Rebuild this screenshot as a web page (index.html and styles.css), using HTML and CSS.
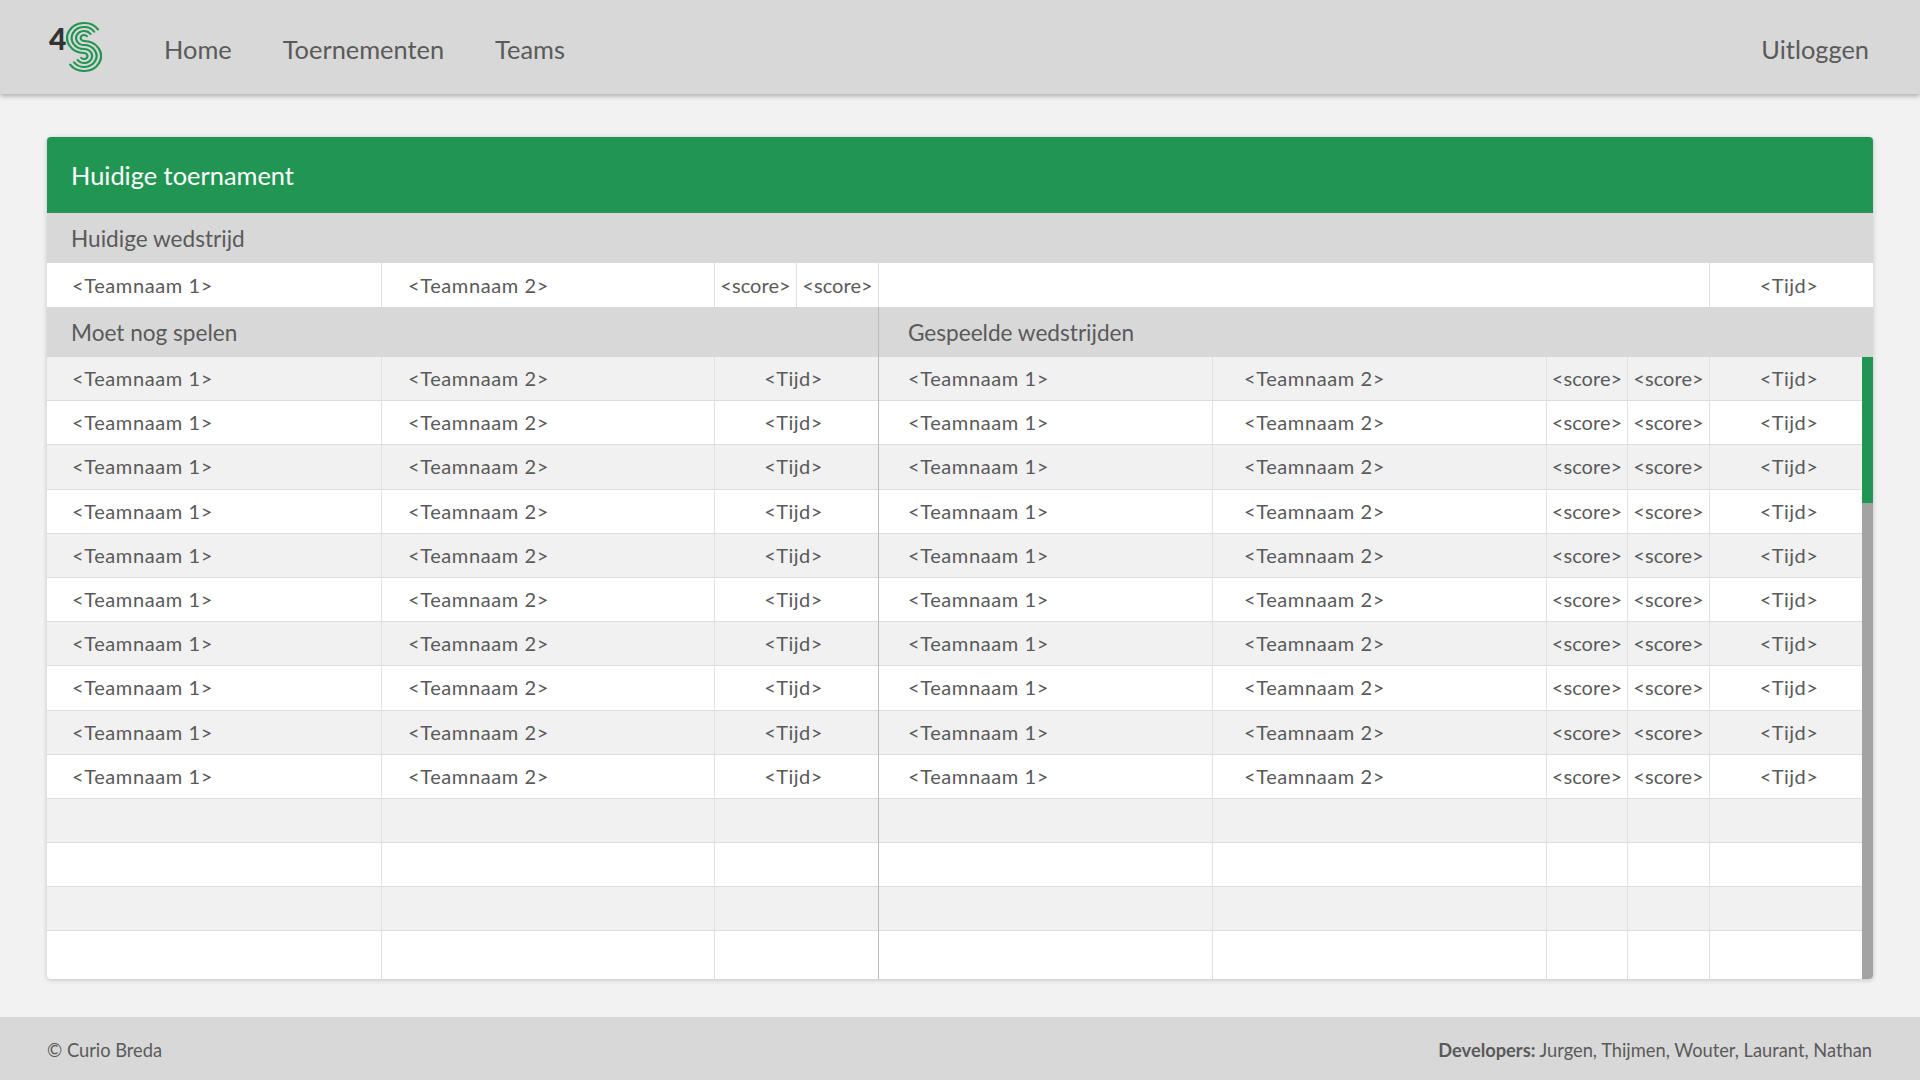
FILE: index.html
```html
<!DOCTYPE html>
<html lang="en">
<head>
  <meta charset="UTF-8" />
  <title>Huidige toernament</title>
  <link rel="stylesheet" href="styles.css">
</head>
<body>
  <nav class="navbar">
    <a class="logo" href="#">
      <span class="logo-four">4</span>
      <svg class="logo-s" width="36" height="50" viewBox="0 0 36 50" fill="none" stroke="#219653" stroke-width="2" stroke-linecap="round">
        <g transform="scale(1.13 1) translate(-2 0)">
          <path d="M30.3 7.4A15 15 0 1 0 18 31A3 3 0 1 1 15.5 35.7" />
          <path d="M27 9.7A11 11 0 1 0 18 27A7 7 0 1 1 12.3 38" />
          <path d="M23.7 12A7 7 0 1 0 18 23A11 11 0 1 1 9 40.3" />
          <path d="M20.5 14.3A3 3 0 1 0 18 19A15 15 0 1 1 5.7 42.6" />
        </g>
      </svg>
    </a>
    <a class="nav-link" href="#">Home</a>
    <a class="nav-link" href="#">Toernementen</a>
    <a class="nav-link" href="#">Teams</a>
    <a class="nav-link logout" href="#">Uitloggen</a>
  </nav>

  <main class="content">
    <section class="card">
      <h1 class="card-head">Huidige toernament</h1>
      <h2 class="band">Huidige wedstrijd</h2>
      <div class="row current">
        <div>&lt;Teamnaam 1&gt;</div><div>&lt;Teamnaam 2&gt;</div><div class="mid">&lt;score&gt;</div><div class="mid">&lt;score&gt;</div><div></div><div class="mid">&lt;Tijd&gt;</div>
      </div>
      <div class="split">
        <div class="col-left">
          <h2 class="band">Moet nog spelen</h2>
          <div class="rows">
            <div class="row todo"><div>&lt;Teamnaam 1&gt;</div><div>&lt;Teamnaam 2&gt;</div><div class="mid">&lt;Tijd&gt;</div></div>
            <div class="row todo"><div>&lt;Teamnaam 1&gt;</div><div>&lt;Teamnaam 2&gt;</div><div class="mid">&lt;Tijd&gt;</div></div>
            <div class="row todo"><div>&lt;Teamnaam 1&gt;</div><div>&lt;Teamnaam 2&gt;</div><div class="mid">&lt;Tijd&gt;</div></div>
            <div class="row todo"><div>&lt;Teamnaam 1&gt;</div><div>&lt;Teamnaam 2&gt;</div><div class="mid">&lt;Tijd&gt;</div></div>
            <div class="row todo"><div>&lt;Teamnaam 1&gt;</div><div>&lt;Teamnaam 2&gt;</div><div class="mid">&lt;Tijd&gt;</div></div>
            <div class="row todo"><div>&lt;Teamnaam 1&gt;</div><div>&lt;Teamnaam 2&gt;</div><div class="mid">&lt;Tijd&gt;</div></div>
            <div class="row todo"><div>&lt;Teamnaam 1&gt;</div><div>&lt;Teamnaam 2&gt;</div><div class="mid">&lt;Tijd&gt;</div></div>
            <div class="row todo"><div>&lt;Teamnaam 1&gt;</div><div>&lt;Teamnaam 2&gt;</div><div class="mid">&lt;Tijd&gt;</div></div>
            <div class="row todo"><div>&lt;Teamnaam 1&gt;</div><div>&lt;Teamnaam 2&gt;</div><div class="mid">&lt;Tijd&gt;</div></div>
            <div class="row todo"><div>&lt;Teamnaam 1&gt;</div><div>&lt;Teamnaam 2&gt;</div><div class="mid">&lt;Tijd&gt;</div></div>
            <div class="row todo"><div></div><div></div><div></div></div>
            <div class="row todo"><div></div><div></div><div></div></div>
            <div class="row todo"><div></div><div></div><div></div></div>
            <div class="row todo"><div></div><div></div><div></div></div>
          </div>
        </div>
        <div class="col-right">
          <h2 class="band">Gespeelde wedstrijden</h2>
          <div class="scroll">
            <div class="rows">
              <div class="row played"><div>&lt;Teamnaam 1&gt;</div><div>&lt;Teamnaam 2&gt;</div><div class="mid">&lt;score&gt;</div><div class="mid">&lt;score&gt;</div><div class="mid">&lt;Tijd&gt;</div></div>
              <div class="row played"><div>&lt;Teamnaam 1&gt;</div><div>&lt;Teamnaam 2&gt;</div><div class="mid">&lt;score&gt;</div><div class="mid">&lt;score&gt;</div><div class="mid">&lt;Tijd&gt;</div></div>
              <div class="row played"><div>&lt;Teamnaam 1&gt;</div><div>&lt;Teamnaam 2&gt;</div><div class="mid">&lt;score&gt;</div><div class="mid">&lt;score&gt;</div><div class="mid">&lt;Tijd&gt;</div></div>
              <div class="row played"><div>&lt;Teamnaam 1&gt;</div><div>&lt;Teamnaam 2&gt;</div><div class="mid">&lt;score&gt;</div><div class="mid">&lt;score&gt;</div><div class="mid">&lt;Tijd&gt;</div></div>
              <div class="row played"><div>&lt;Teamnaam 1&gt;</div><div>&lt;Teamnaam 2&gt;</div><div class="mid">&lt;score&gt;</div><div class="mid">&lt;score&gt;</div><div class="mid">&lt;Tijd&gt;</div></div>
              <div class="row played"><div>&lt;Teamnaam 1&gt;</div><div>&lt;Teamnaam 2&gt;</div><div class="mid">&lt;score&gt;</div><div class="mid">&lt;score&gt;</div><div class="mid">&lt;Tijd&gt;</div></div>
              <div class="row played"><div>&lt;Teamnaam 1&gt;</div><div>&lt;Teamnaam 2&gt;</div><div class="mid">&lt;score&gt;</div><div class="mid">&lt;score&gt;</div><div class="mid">&lt;Tijd&gt;</div></div>
              <div class="row played"><div>&lt;Teamnaam 1&gt;</div><div>&lt;Teamnaam 2&gt;</div><div class="mid">&lt;score&gt;</div><div class="mid">&lt;score&gt;</div><div class="mid">&lt;Tijd&gt;</div></div>
              <div class="row played"><div>&lt;Teamnaam 1&gt;</div><div>&lt;Teamnaam 2&gt;</div><div class="mid">&lt;score&gt;</div><div class="mid">&lt;score&gt;</div><div class="mid">&lt;Tijd&gt;</div></div>
              <div class="row played"><div>&lt;Teamnaam 1&gt;</div><div>&lt;Teamnaam 2&gt;</div><div class="mid">&lt;score&gt;</div><div class="mid">&lt;score&gt;</div><div class="mid">&lt;Tijd&gt;</div></div>
              <div class="row played"><div></div><div></div><div></div><div></div><div></div></div>
              <div class="row played"><div></div><div></div><div></div><div></div><div></div></div>
              <div class="row played"><div></div><div></div><div></div><div></div><div></div></div>
              <div class="row played"><div></div><div></div><div></div><div></div><div></div></div>
            </div>
            <div class="scrollbar"><div class="scrollbar-thumb"></div></div>
          </div>
        </div>
      </div>
    </section>
  </main>

  <footer class="footer">
    <span>© Curio Breda</span>
    <span><strong>Developers:</strong> Jurgen, Thijmen, Wouter, Laurant, Nathan</span>
  </footer>
</body>
</html>
```

FILE: styles.css
```css
* {
  box-sizing: border-box;
}
body {
  margin: 0;
  height: 100vh;
  display: flex;
  flex-direction: column;
  font-family: Lato, "Noto Sans", sans-serif;
  background: #f2f2f2;
  color: #5a5a5a;
  overflow: hidden;
}
a {
  color: inherit;
  text-decoration: none;
}

.navbar {
  height: 94px;
  flex: none;
  display: flex;
  align-items: center;
  padding: 4px 51px 0 49px;
  background: #d8d8d8;
  box-shadow: 0 2px 5px rgba(0, 0, 0, 0.3);
  position: relative;
}
.logo {
  display: flex;
  align-items: flex-start;
  width: 115px;
  height: 50px;
  margin-top: -4px;
}
.logo-four {
  width: 17px;
  margin-top: 1px;
  font-size: 30px;
  line-height: 30px;
  font-weight: 900;
  color: #333;
}
.nav-link {
  font-size: 25.4px;
  margin-right: 51px;
}
.logout {
  margin: 0 0 0 auto;
}

.content {
  flex: 1;
  padding: 43px 47px 38px;
}
.card {
  height: 842px;
  display: flex;
  flex-direction: column;
  border-radius: 4px;
  background: #fff;
  box-shadow: 0 1px 5px rgba(0, 0, 0, 0.2);
  overflow: hidden;
}
.card-head {
  margin: 0;
  height: 76px;
  flex: none;
  display: flex;
  align-items: center;
  padding-left: 24px;
  background: #219653;
  color: #fff;
  font-size: 25.4px;
  font-weight: 400;
}
.band {
  margin: 0;
  height: 50px;
  flex: none;
  display: flex;
  align-items: center;
  padding-left: 24px;
  background: #d8d8d8;
  font-size: 22.6px;
  font-weight: 400;
}
.col-right .band {
  padding-left: 29px;
}

.row {
  display: grid;
  height: 44.2px;
  font-size: 20px;
  border-bottom: 1px solid #ddd;
}
.row > div {
  display: flex;
  align-items: center;
  padding-bottom: 1px;
  letter-spacing: 0.6px;
  border-right: 1px solid #e0e0e0;
}
.row > div:nth-child(1) {
  padding-left: 25px;
}
.row > div:nth-child(2) {
  padding-left: 26px;
}
.row > .mid {
  padding-left: 0;
  justify-content: center;
  letter-spacing: 0.05px;
}
.row > .mid:last-child {
  letter-spacing: 0.5px;
}
.current {
  height: 44px;
  flex: none;
  border-bottom: 0;
  grid-template-columns: 335px 333px 82px 82px 831px 1fr;
}
.todo {
  grid-template-columns: 335px 333px 1fr;
}
.played {
  grid-template-columns: 334px 334px 81px 82px 1fr;
}
.played > div:nth-child(1) {
  padding-left: 29px;
}
.played > div:nth-child(2) {
  padding-left: 31px;
}
.row > div:last-child {
  border-right: 0;
}
.current > div:nth-child(5) {
  border-right: 1px solid #e0e0e0;
}
.current > .mid:last-child {
  padding-right: 5px;
}
.todo > .mid:last-child {
  padding-right: 6px;
}
.played > .mid:last-child {
  padding-left: 6px;
}

.rows {
  flex: 1;
  display: flex;
  flex-direction: column;
  min-width: 0;
}
.rows .row:nth-child(odd) {
  background: #f1f1f1;
}
.rows .row:last-child {
  flex: 1;
  border-bottom: 0;
}

.split {
  flex: 1;
  display: grid;
  grid-template-columns: 832px 1fr;
}
.col-left {
  display: flex;
  flex-direction: column;
  border-right: 1px solid #bbb;
}
.col-right {
  display: flex;
  flex-direction: column;
}
.scroll {
  flex: 1;
  display: flex;
}
.scrollbar {
  width: 11px;
  flex: none;
  background: #a3a3a3;
}
.scrollbar-thumb {
  height: 146px;
  background: #219653;
}

.footer {
  height: 63px;
  flex: none;
  display: flex;
  align-items: center;
  justify-content: space-between;
  padding: 3px 48px 0 47px;
  background: #d8d8d8;
  font-size: 18.3px;
}
.footer strong {
  font-weight: 700;
}
```
